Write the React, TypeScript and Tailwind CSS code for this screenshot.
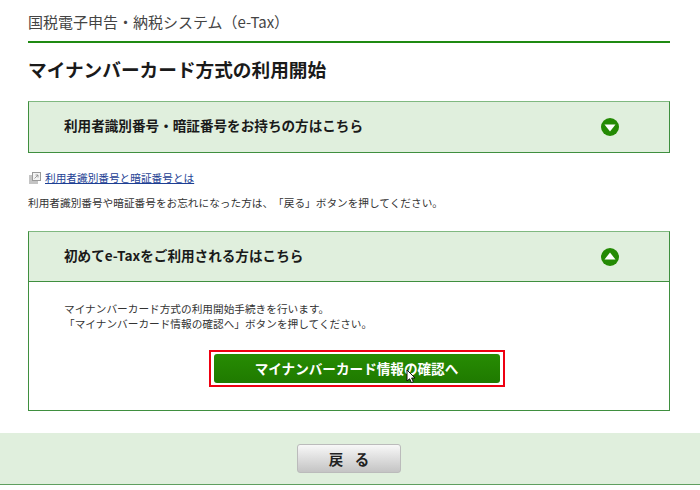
function ToggleIcon({ open }: { open: boolean }) {
  return (
    <svg width="18" height="18" viewBox="0 0 18 18" className="shrink-0">
      <circle cx="9" cy="9" r="9" fill="#248a04" />
      {open ? (
        <path d="M9 4.5 L14.5 11.5 L3.5 11.5 Z" fill="#ffffff" />
      ) : (
        <path d="M9 13.5 L3.5 6.5 L14.5 6.5 Z" fill="#ffffff" />
      )}
    </svg>
  );
}

function LinkIcon() {
  return (
    <svg width="12" height="12" viewBox="0 0 12 12" className="shrink-0">
      <rect x="0" y="3" width="9" height="9" fill="#c4c4c4" />
      <rect x="3.5" y="0.5" width="8" height="8" fill="#f4f4f4" stroke="#9a9a9a" />
      <path d="M5.5 6.5 L9 3 M6.5 3 L9 3 L9 5.5" fill="none" stroke="#8a8a8a" strokeWidth="0.8" />
    </svg>
  );
}

function SectionHeader({ title, open }: { title: string; open: boolean }) {
  return (
    <div className={`flex items-center justify-between border border-[#3f8f3f] border-t-[#80b880] bg-[#e0efdd] pl-[35px] pr-[50px] ${open ? "h-[51px]" : "h-[52px]"}`}>
      <span className="pb-[3px] text-[13.6px] font-bold text-[#1a1a1a]">{title}</span>
      <ToggleIcon open={open} />
    </div>
  );
}

export default function App() {
  return (
    <div className="h-[490px] w-[700px] overflow-hidden bg-white font-['Noto_Sans_CJK_JP','Liberation_Sans',sans-serif] text-[#333] [text-spacing-trim:space-all]">
      <div className="pl-[28px] pr-[30px]">
        <div className="flex h-[43px] items-end border-b-2 border-[#1f8a12] pb-[9px] text-[15px] leading-[20px] text-[#444]">
          国税電子申告・納税システム（e-Tax）
        </div>
        <h1 className="mt-[14px] text-[18.67px] font-bold leading-[24px] text-[#1a1a1a]">
          マイナンバーカード方式の利用開始
        </h1>

        <div className="mt-[20px]">
          <SectionHeader title="利用者識別番号・暗証番号をお持ちの方はこちら" open={false} />
        </div>

        <div className="mt-[17px] flex items-center gap-[4px] pl-[1px] text-[10.67px] leading-[16px]">
          <LinkIcon />
          <a className="text-[#1d3f94] underline">利用者識別番号と暗証番号とは</a>
        </div>
        <p className="mt-[9px] text-[10.67px] leading-[16px] text-[#333]">
          利用者識別番号や暗証番号をお忘れになった方は、「戻る」ボタンを押してください。
        </p>

        <div className="mt-[20px]">
          <SectionHeader title="初めてe-Taxをご利用される方はこちら" open={true} />
          <div className="border border-t-0 border-[#3f8f3f] pb-[23px] pl-[35px] pr-[20px] pt-[19px]">
            <p className="text-[10.67px] leading-[15px] text-[#333]">
              マイナンバーカード方式の利用開始手続きを行います。
              <br />
              「マイナンバーカード情報の確認へ」ボタンを押してください。
            </p>
            <div className="mt-[19px] flex justify-center">
              <div className="relative border-2 border-[#ee0011] px-[3px] py-[2px]">
                <button className="flex h-[29px] w-[286px] items-center justify-center rounded-[3px] bg-gradient-to-b from-[#278c03] to-[#1f7a00] text-[13.6px] font-bold text-white">
                  マイナンバーカード情報の確認へ
                </button>
                <svg width="11" height="15" viewBox="0 0 11 15" className="absolute left-[195px] top-[17px]">
                  <path d="M1 1 L1 12 L3.6 9.8 L5.4 13.6 L7.4 12.7 L5.6 9 L9 9 Z" fill="#ffffff" stroke="#111111" strokeWidth="1" />
                </svg>
              </div>
            </div>
          </div>
        </div>
      </div>

      <div className="mt-[22px] flex h-[52px] items-center justify-center border-b border-[#5f9f5f] bg-[#e0efdd] pr-[2px]">
        <button className="h-[29px] w-[104px] rounded-[3px] border border-[#bbb] bg-gradient-to-b from-[#f8f8f8] to-[#c4c4c4] indent-[0.8em] text-[14.5px] font-bold tracking-[0.8em] text-[#222]">
          戻る
        </button>
      </div>
    </div>
  );
}
